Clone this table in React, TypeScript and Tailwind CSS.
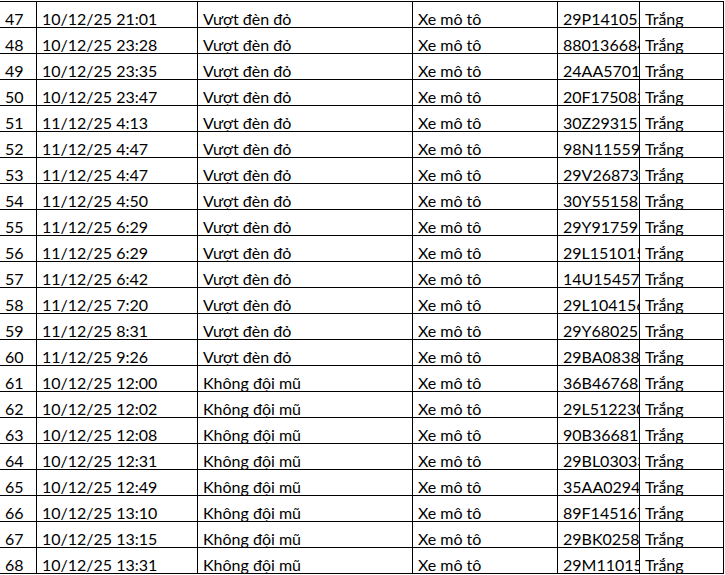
const ROWS: [number, string, string, string][] = [
  [47, "10/12/25 21:01", "Vượt đèn đỏ", "29P141055"],
  [48, "10/12/25 23:28", "Vượt đèn đỏ", "880136684"],
  [49, "10/12/25 23:35", "Vượt đèn đỏ", "24AA5701"],
  [50, "10/12/25 23:47", "Vượt đèn đỏ", "20F175082"],
  [51, "11/12/25 4:13", "Vượt đèn đỏ", "30Z29315"],
  [52, "11/12/25 4:47", "Vượt đèn đỏ", "98N115599"],
  [53, "11/12/25 4:47", "Vượt đèn đỏ", "29V26873"],
  [54, "11/12/25 4:50", "Vượt đèn đỏ", "30Y55158"],
  [55, "11/12/25 6:29", "Vượt đèn đỏ", "29Y91759"],
  [56, "11/12/25 6:29", "Vượt đèn đỏ", "29L151015"],
  [57, "11/12/25 6:42", "Vượt đèn đỏ", "14U15457"],
  [58, "11/12/25 7:20", "Vượt đèn đỏ", "29L104156"],
  [59, "11/12/25 8:31", "Vượt đèn đỏ", "29Y68025"],
  [60, "11/12/25 9:26", "Vượt đèn đỏ", "29BA08381"],
  [61, "10/12/25 12:00", "Không đội mũ", "36B467689"],
  [62, "10/12/25 12:02", "Không đội mũ", "29L512230"],
  [63, "10/12/25 12:08", "Không đội mũ", "90B366815"],
  [64, "10/12/25 12:31", "Không đội mũ", "29BL03033"],
  [65, "10/12/25 12:49", "Không đội mũ", "35AA02945"],
  [66, "10/12/25 13:10", "Không đội mũ", "89F145167"],
  [67, "10/12/25 13:15", "Không đội mũ", "29BK02589"],
  [68, "10/12/25 13:31", "Không đội mũ", "29M110155"],
];

function Cell({ children }: { children: React.ReactNode }) {
  return (
    <div className="flex h-[26px] items-end overflow-hidden whitespace-nowrap border-r border-b border-black pl-[5px] leading-4">
      {children}
    </div>
  );
}

export default function App() {
  return (
    <div
      className="h-[575px] w-[725px] overflow-hidden bg-white text-[16px] text-black"
      style={{ fontFamily: "Lato, 'Open Sans', sans-serif" }}
    >
      <div className="mt-px grid w-[724px] grid-cols-[37px_161px_215px_145px_82px_84px] border-t border-black">
        {ROWS.map(([no, time, violation, plate]) => (
          <div key={no} className="contents">
            <Cell>{no}</Cell>
            <Cell>{time}</Cell>
            <Cell>{violation}</Cell>
            <Cell>Xe mô tô</Cell>
            <Cell>{plate}</Cell>
            <Cell>Trắng</Cell>
          </div>
        ))}
      </div>
    </div>
  );
}
